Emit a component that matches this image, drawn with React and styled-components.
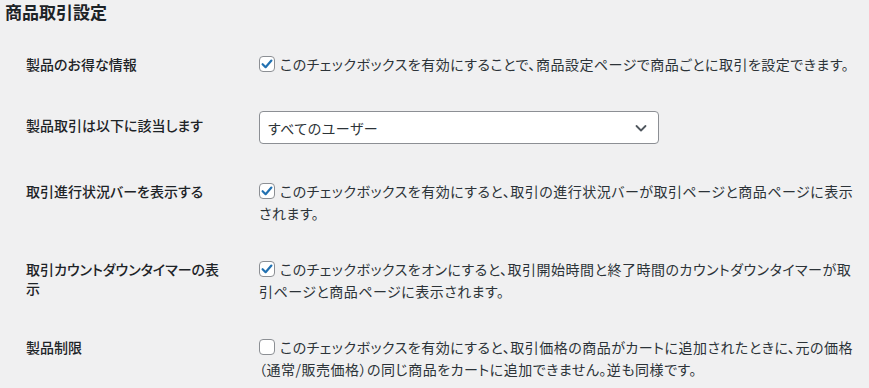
import { styled, createGlobalStyle } from "styled-components";

const GlobalStyle = createGlobalStyle`
  html, body {
    margin: 0;
    padding: 0;
    background: #f0f0f1;
  }
  body {
    font-family: "Noto Sans CJK JP", "Noto Sans", sans-serif;
    color: #1d2327;
    overflow: hidden;
  }
`;

const Page = styled.div`
  padding: 0 0 0 5px;
`;

const Title = styled.h2`
  margin: 0;
  font-size: 17px;
  line-height: 24px;
  font-weight: 700;
  color: #1d2327;
`;

const Table = styled.div`
  margin-top: 12px;
  padding-left: 21px;
`;

const Row = styled.div`
  display: grid;
  grid-template-columns: 233px 599px;
  align-items: start;
  padding: ${(props) => (props.$wide ? "19px 0" : "17px 0")};
`;

const Label = styled.div`
  max-width: 200px;
  padding-top: ${(props) => props.$offset || 1.5}px;
  font-size: 14px;
  line-height: 19px;
  font-weight: 500;
  font-feature-settings: "palt";
  color: #1d2327;
`;

const Description = styled.p`
  margin: 0;
  font-size: 14px;
  line-height: 22px;
  letter-spacing: 0.5px;
  font-feature-settings: "palt";
  color: #2c3338;
`;

const Box = styled.span`
  display: inline-block;
  box-sizing: border-box;
  width: 16px;
  height: 16px;
  margin: 3px 5px 0 0;
  vertical-align: top;
  border: 1px solid #8c8f94;
  border-radius: 4px;
  background: #fff;
  position: relative;

  svg {
    position: absolute;
    left: -1px;
    top: -1px;
  }
`;

const Select = styled.div`
  box-sizing: border-box;
  width: 400px;
  height: 33px;
  display: flex;
  align-items: center;
  justify-content: space-between;
  padding: 0 10px 0 8px;
  background: #fff;
  border: 1px solid #8c8f94;
  border-radius: 4px;
  font-size: 14px;
  letter-spacing: 0.5px;
  font-feature-settings: "palt";
  color: #2c3338;
`;

const Checkbox = ({ checked }) => (
  <Box>
    {checked && (
      <svg width="16" height="16" viewBox="0 0 16 16" fill="none">
        <path
          d="M3.6 8.2L6.6 11.2L12.4 4.6"
          stroke="#2271b1"
          strokeWidth="2.2"
          strokeLinecap="round"
          strokeLinejoin="round"
        />
      </svg>
    )}
  </Box>
);

const Chevron = () => (
  <svg width="14" height="14" viewBox="0 0 14 14" fill="none">
    <path
      d="M2.5 5L7 9.5L11.5 5"
      stroke="#50575e"
      strokeWidth="1.8"
      strokeLinecap="round"
      strokeLinejoin="round"
    />
  </svg>
);

const settings = [
  {
    label: "取引進行状況バーを表示する",
    checked: true,
    text: "このチェックボックスを有効にすると、取引の進行状況バーが取引ページと商品ページに表示されます。",
  },
  {
    label: "取引カウントダウンタイマーの表示",
    checked: true,
    text: "このチェックボックスをオンにすると、取引開始時間と終了時間のカウントダウンタイマーが取引ページと商品ページに表示されます。",
  },
  {
    label: "製品制限",
    checked: false,
    text: "このチェックボックスを有効にすると、取引価格の商品がカートに追加されたときに、元の価格（通常/販売価格）の同じ商品をカートに追加できません。逆も同様です。",
  },
];

const App = () => {
  return (
    <Page>
      <GlobalStyle />
      <Title>商品取引設定</Title>
      <Table>
        <Row>
          <Label>製品のお得な情報</Label>
          <Description>
            <Checkbox checked />
            このチェックボックスを有効にすることで、商品設定ページで商品ごとに取引を設定できます。
          </Description>
        </Row>
        <Row $wide>
          <Label $offset={4.5}>製品取引は以下に該当します</Label>
          <Select>
            <span>すべてのユーザー</span>
            <Chevron />
          </Select>
        </Row>
        {settings.map((item) => (
          <Row key={item.label}>
            <Label>{item.label}</Label>
            <Description>
              <Checkbox checked={item.checked} />
              {item.text}
            </Description>
          </Row>
        ))}
      </Table>
    </Page>
  );
};

export default App;
